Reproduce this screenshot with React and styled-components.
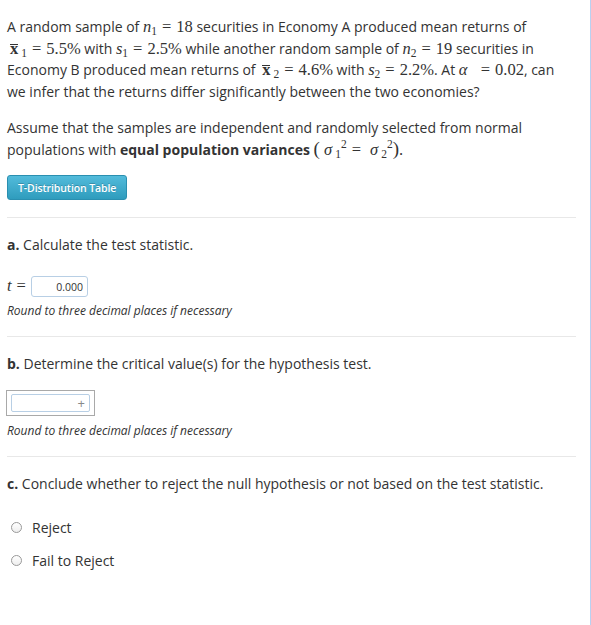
import React from 'react';
import styled, { createGlobalStyle } from 'styled-components';

const GlobalStyle = createGlobalStyle`
    html, body {
        margin: 0;
        padding: 0;
        background: #fff;
    }
    body {
        font-family: "Open Sans", "Noto Sans", sans-serif;
        color: #333;
    }
`;

const M = ({ children }) => <MathText>{children}</MathText>;

const App = () => {
    return (
        <>
            <GlobalStyle />
            <Page>
                <Paragraph>
                    A random sample of <M><i>n</i><Sub>1</Sub><Eq>=</Eq>18</M> securities in Economy A produced mean returns of{' '}
                    <M><Bar>x</Bar><Sub $gap>1</Sub><Eq>=</Eq>5.5%</M> with <M><i>s</i><Sub>1</Sub><Eq>=</Eq>2.5%</M> while another random sample of{' '}
                    <M><i>n</i><Sub>2</Sub><Eq>=</Eq>19</M> securities in Economy B produced mean returns of{' '}
                    <M><Bar>x</Bar><Sub $gap>2</Sub><Eq>=</Eq>4.6%</M> with <M><i>s</i><Sub>2</Sub><Eq>=</Eq>2.2%</M>. At <M><i>α</i>&nbsp;&nbsp;<Eq>=</Eq>0.02</M>, can
                    we infer that the returns differ significantly between the two economies?
                </Paragraph>

                <Paragraph $top={14}>
                    Assume that the samples are independent and randomly selected from normal populations with{' '}
                    <b>equal population variances</b>{' '}
                    <M>
                        <Paren>(</Paren> <i>σ</i><Sub $gap>1</Sub><Sup>2</Sup><Eq>=</Eq>&nbsp;<i>σ</i><Sub $gap>2</Sub><Sup>2</Sup><Paren>)</Paren>.
                    </M>
                </Paragraph>

                <TableButton>T-Distribution Table</TableButton>

                <Part>
                    <Question><b>a.</b> Calculate the test statistic.</Question>
                    <AnswerRow>
                        <M><i>t</i><Eq>=</Eq></M>
                        <ValueInput readOnly value="0.000" />
                    </AnswerRow>
                    <Hint>Round to three decimal places if necessary</Hint>
                </Part>

                <Part>
                    <Question><b>b.</b> Determine the critical value(s) for the hypothesis test.</Question>
                    <MultiBox>
                        <MultiInput>
                            <Plus>+</Plus>
                        </MultiInput>
                    </MultiBox>
                    <Hint $top={6}>Round to three decimal places if necessary</Hint>
                </Part>

                <Part>
                    <Question><b>c.</b> Conclude whether to reject the null hypothesis or not based on the test statistic.</Question>
                    <Options>
                        <Option>
                            <Radio type="radio" name="conclusion" />
                            Reject
                        </Option>
                        <Option>
                            <Radio type="radio" name="conclusion" />
                            Fail to Reject
                        </Option>
                    </Options>
                </Part>
            </Page>
        </>
    );
}

export default App;

const Page = styled.main`
    box-sizing: border-box;
    width: 591px;
    min-height: 100vh;
    padding: 16px 14px 40px 7px;
    border-right: 1px solid #b9d1f1;
`;

const Paragraph = styled.p`
    margin: ${({ $top }) => $top || 0}px 0 0;
    font-size: 14px;
    line-height: 21.7px;

    & > b {
        font-weight: 700;
    }
`;

const MathText = styled.span`
    font-family: "Liberation Serif", "DejaVu Serif", serif;
    font-size: 16.5px;
    line-height: 1;
    white-space: nowrap;

    & i {
        font-style: italic;
    }
`;

const Eq = styled.span`
    margin: 0 5px;
`;

const Bar = styled.span`
    position: relative;
    display: inline-block;
    margin-left: 3px;
    font-weight: 700;

    &::before {
        content: '';
        position: absolute;
        left: 0;
        right: 0;
        top: 3px;
        border-top: 1px solid #333;
    }
`;

const Sub = styled.span`
    position: relative;
    top: 3px;
    font-size: 11.5px;
    line-height: 1;
    margin-left: ${({ $gap }) => ($gap ? 3 : 0)}px;
`;

const Sup = styled.span`
    position: relative;
    top: -7px;
    font-size: 11.5px;
    line-height: 1;
`;

const Paren = styled.span`
    font-size: 19px;
    line-height: 1;
`;

const TableButton = styled.button`
    display: block;
    margin-top: 15px;
    height: 25px;
    padding: 0 10px;
    border: 1px solid #2a8fb0;
    border-radius: 3px;
    background: linear-gradient(#52bbdb, #2f9cbd);
    color: #fff;
    font-family: "Open Sans", sans-serif;
    font-size: 10.5px;
    font-weight: 600;
    letter-spacing: -0.1px;
    text-shadow: 0 -1px 0 rgba(0, 0, 0, 0.2);
`;

const Part = styled.section`
    margin-top: 17px;
    padding-top: 16px;
    border-top: 1px solid #e8e8e8;
`;

const Question = styled.p`
    margin: 0;
    font-size: 14px;
    line-height: 22px;

    & > b {
        font-weight: 700;
    }
`;

const AnswerRow = styled.div`
    display: flex;
    align-items: center;
    margin-top: 20px;

    & > span > span {
        margin-right: 5px;
    }
`;

const ValueInput = styled.input`
    box-sizing: border-box;
    width: 57px;
    height: 21px;
    padding: 0 4px;
    border: 1px solid #b8cfe5;
    border-radius: 3px;
    text-align: right;
    font-family: "Open Sans", sans-serif;
    font-size: 10.5px;
    color: #333;
    outline: none;
`;

const Hint = styled.p`
    margin: ${({ $top }) => $top || 5}px 0 0;
    font-size: 12px;
    line-height: 17px;
    font-style: italic;
`;

const MultiBox = styled.div`
    box-sizing: border-box;
    width: 89px;
    height: 26px;
    margin-top: 15px;
    margin-left: -1px;
    padding: 3px 4px 0 4px;
    border: 1px solid #a9a9a9;
`;

const MultiInput = styled.div`
    box-sizing: border-box;
    height: 18px;
    display: flex;
    justify-content: flex-end;
    align-items: center;
    padding-right: 4px;
    border: 1px solid #b8cfe5;
    border-radius: 2px;
`;

const Plus = styled.span`
    font-size: 13px;
    line-height: 1;
    color: #888;
`;

const Options = styled.div`
    display: flex;
    flex-direction: column;
    gap: 11px;
    margin-top: 21px;
    padding-left: 4px;
`;

const Option = styled.label`
    display: flex;
    align-items: center;
    gap: 10px;
    height: 22px;
    font-size: 14px;
`;

const Radio = styled.input`
    appearance: none;
    box-sizing: border-box;
    width: 11px;
    height: 11px;
    margin: 0;
    border: 1px solid #999;
    border-radius: 50%;
    background: linear-gradient(#fff, #eee);
`;
